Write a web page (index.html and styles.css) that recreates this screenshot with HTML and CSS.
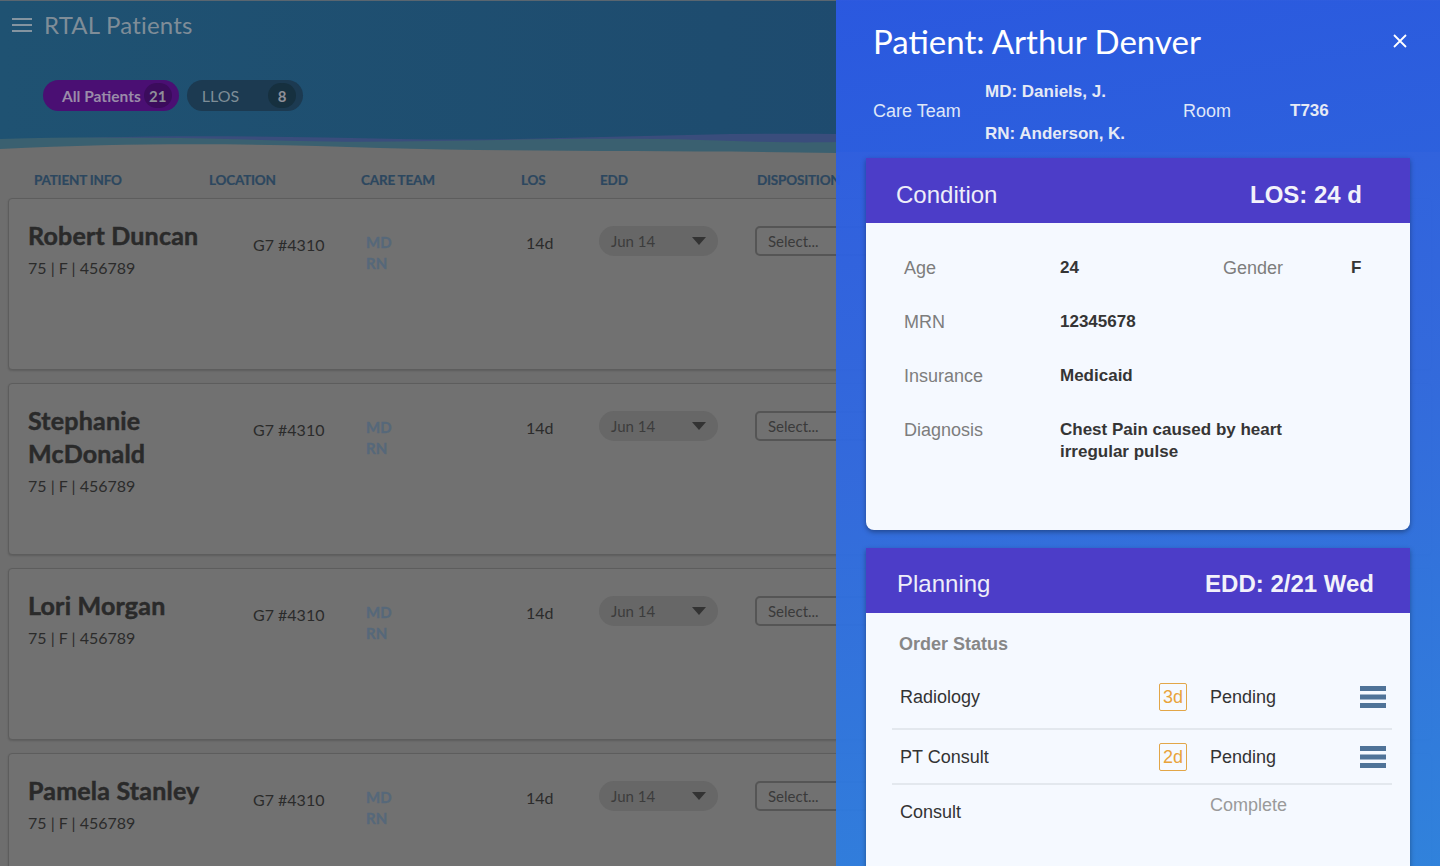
FILE: index.html
```html
<!DOCTYPE html>
<html lang="en">
<head>
<meta charset="utf-8">
<title>RTAL Patients</title>
<link rel="stylesheet" href="styles.css">
</head>
<body>
<div class="app">
  <header class="topbar">
    <div class="title-row">
      <svg class="menu-icon" width="20" height="14" viewBox="0 0 20 14"><rect y="0" width="20" height="2"/><rect y="6" width="20" height="2"/><rect y="12" width="20" height="2"/></svg>
      <h1 class="app-title">RTAL Patients</h1>
    </div>
    <div class="pills">
      <span class="pill pill--active">All Patients<span class="count">21</span></span>
      <span class="pill pill--llos">LLOS<span class="count">8</span></span>
    </div>
    <svg class="wave" width="836" height="26" viewBox="0 0 836 26" preserveAspectRatio="none">
      <path d="M0 12 C120 4 260 6 400 9 C540 12 680 2 836 4 L836 26 L0 26 Z" fill="#3a4d7c"/>
      <path d="M0 9 C100 6 200 8 300 11 C420 14 560 6 700 10 C760 12 800 13 836 12 L836 26 L0 26 Z" fill="#3a6070"/>
      <path d="M0 19 C150 12 260 14 380 18 C520 22 680 20 836 23 L836 26 L0 26 Z" fill="#6e6e6e"/>
    </svg>
  </header>

  <div class="cols">
    <span>PATIENT INFO</span><span>LOCATION</span><span>CARE TEAM</span><span>LOS</span><span>EDD</span><span>DISPOSITION</span>
  </div>

  <div class="list">
    <div class="card">
      <div class="pinfo"><div class="pname">Robert Duncan</div><div class="psub">75 | F | 456789</div></div>
      <div class="loc">G7 #4310</div>
      <div class="team"><div>MD</div><div>RN</div></div>
      <div class="los">14d</div>
      <div class="edd"><span>Jun 14</span><span class="caret"></span></div>
      <div class="dispo"><span class="select">Select...</span></div>
    </div>
    <div class="card">
      <div class="pinfo"><div class="pname">Stephanie McDonald</div><div class="psub">75 | F | 456789</div></div>
      <div class="loc">G7 #4310</div>
      <div class="team"><div>MD</div><div>RN</div></div>
      <div class="los">14d</div>
      <div class="edd"><span>Jun 14</span><span class="caret"></span></div>
      <div class="dispo"><span class="select">Select...</span></div>
    </div>
    <div class="card">
      <div class="pinfo"><div class="pname">Lori Morgan</div><div class="psub">75 | F | 456789</div></div>
      <div class="loc">G7 #4310</div>
      <div class="team"><div>MD</div><div>RN</div></div>
      <div class="los">14d</div>
      <div class="edd"><span>Jun 14</span><span class="caret"></span></div>
      <div class="dispo"><span class="select">Select...</span></div>
    </div>
    <div class="card">
      <div class="pinfo"><div class="pname">Pamela Stanley</div><div class="psub">75 | F | 456789</div></div>
      <div class="loc">G7 #4310</div>
      <div class="team"><div>MD</div><div>RN</div></div>
      <div class="los">14d</div>
      <div class="edd"><span>Jun 14</span><span class="caret"></span></div>
      <div class="dispo"><span class="select">Select...</span></div>
    </div>
  </div>
</div>

<aside class="drawer">
  <div class="drawer-head">
    <div class="drawer-title-row">
      <h2 class="drawer-title">Patient: Arthur Denver</h2>
      <svg class="close" width="14" height="14" viewBox="0 0 14 14"><path d="M1 1 L13 13 M13 1 L1 13" stroke="#fff" stroke-width="1.8" fill="none"/></svg>
    </div>
    <div class="care">
      <span class="care-label">Care Team</span>
      <span class="care-val">MD: Daniels, J.</span>
      <span class="care-label room-label">Room</span>
      <span class="care-val room-val">T736</span>
      <span class="care-val rn">RN: Anderson, K.</span>
    </div>
  </div>

  <section class="pcard">
    <div class="pcard-head"><span class="pcard-title">Condition</span><span class="pcard-meta">LOS: 24 d</span></div>
    <div class="pcard-body cond">
      <span class="lbl">Age</span><span class="val">24</span><span class="lbl">Gender</span><span class="val">F</span>
      <span class="lbl">MRN</span><span class="val">12345678</span><span></span><span></span>
      <span class="lbl">Insurance</span><span class="val">Medicaid</span><span></span><span></span>
      <span class="lbl">Diagnosis</span><span class="val diag">Chest Pain caused by heart irregular pulse</span>
    </div>
  </section>

  <section class="pcard">
    <div class="pcard-head pcard-head--plan"><span class="pcard-title">Planning</span><span class="pcard-meta">EDD: 2/21 Wed</span></div>
    <div class="pcard-body plan">
      <div class="sub-head">Order Status</div>
      <div class="orders">
        <div class="order order--first">
          <span class="oname">Radiology</span><span class="badge">3d</span><span class="ostatus">Pending</span>
          <svg class="drag" width="26" height="22" viewBox="0 0 26 22"><rect y="0" width="26" height="5"/><rect y="8.5" width="26" height="5"/><rect y="17" width="26" height="5"/></svg>
        </div>
        <div class="order">
          <span class="oname">PT Consult</span><span class="badge">2d</span><span class="ostatus">Pending</span>
          <svg class="drag" width="26" height="22" viewBox="0 0 26 22"><rect y="0" width="26" height="5"/><rect y="8.5" width="26" height="5"/><rect y="17" width="26" height="5"/></svg>
        </div>
        <div class="order order--last">
          <span class="oname">Consult</span><span></span><span class="ostatus ostatus--done">Complete</span><span></span>
        </div>
      </div>
      <div class="sub-head">Disposition Plan</div>
    </div>
  </section>
</aside>
</body>
</html>
```

FILE: styles.css
```css
* { box-sizing: border-box; }
html, body { margin: 0; padding: 0; }
body {
  width: 1440px;
  height: 866px;
  overflow: hidden;
  background: #6e6e6e;
  font-family: "Lato", "Liberation Sans", sans-serif;
  position: relative;
}

/* ---------- left app ---------- */
.app { width: 1440px; }

.topbar {
  position: relative;
  height: 152px;
  padding: 10px 12px 0;
  background: linear-gradient(90deg, #1f5272 0%, #1e4c6f 50%, #1f466c 100%);
  border-top: 1px solid #5a6670;
}
.title-row { display: flex; align-items: center; gap: 12px; height: 28px; }
.menu-icon { fill: #8494a0; }
.app-title {
  margin: 0;
  font-size: 24px;
  font-weight: 400;
  color: #7f8d98;
  line-height: 28px;
  letter-spacing: 0.2px;
}
.pills { display: flex; gap: 8px; margin: 41px 0 0 31px; }
.pill {
  display: inline-flex;
  align-items: center;
  height: 31px;
  border-radius: 16px;
  font-size: 16px;
}
.pill--active {
  background: #4a0f73;
  color: #9a8ca9;
  padding: 0 7px 0 19px;
  font-weight: 700;
  font-size: 15.5px;
}
.pill--active .count { background: #3b0c5c; margin-left: 3px; }
.pill--llos {
  background: #1c3a51;
  color: #7e8d97;
  padding: 0 7px 0 15px;
}
.pill--llos .count { background: #16303f; margin-left: 29px; }
.count {
  display: inline-flex;
  align-items: center;
  justify-content: center;
  min-width: 28px;
  height: 25px;
  border-radius: 13px;
  font-weight: 700;
  font-size: 15px;
  color: #8e8f98;
}
.wave { position: absolute; left: 0; bottom: -4px; display: block; }

.cols {
  display: grid;
  grid-template-columns: 175px 152px 160px 79px 157px 1fr;
  padding: 0 0 10px 34px;
  height: 46px;
  align-items: end;
  font-size: 13.5px;
  line-height: 16px;
  font-weight: 700;
  color: #2c475f;
  letter-spacing: -0.2px;
  -webkit-text-stroke: 0.2px #2c475f;
}

.list { display: flex; flex-direction: column; gap: 13px; padding: 0 8px; }
.card {
  display: grid;
  grid-template-columns: 225px 113px 160px 73px 156px 1fr;
  align-items: start;
  height: 172px;
  padding: 20px 0 0 19px;
  background: #717171;
  border: 1px solid #5d5d5d;
  border-radius: 4px;
  box-shadow: 0 1px 2px rgba(0,0,0,0.15);
  color: #2b2b2b;
}
.pname {
  font-size: 25px;
  font-weight: 700;
  line-height: 33px;
  width: 205px;
  letter-spacing: 0.2px;
  color: #2a2a2a;
  -webkit-text-stroke: 0.5px #2a2a2a;
}
.psub { font-size: 16px; line-height: 20px; margin-top: 6px; }
.loc { font-size: 16px; line-height: 20px; padding-top: 16px; }
.team {
  padding-top: 13px;
  font-size: 15px;
  font-weight: 700;
  line-height: 21px;
  color: #56687a;
  -webkit-text-stroke: 0.3px #56687a;
}
.los { font-size: 16px; line-height: 20px; padding-top: 14px; }
.edd {
  margin-top: 7px;
  width: 119px;
  height: 30px;
  border-radius: 15px;
  background: #676767;
  display: flex;
  align-items: center;
  justify-content: space-between;
  padding: 0 12px;
  font-size: 15px;
  color: #3c3c3c;
}
.caret {
  width: 0; height: 0;
  border-left: 7px solid transparent;
  border-right: 7px solid transparent;
  border-top: 8px solid #333;
}
.dispo { margin-top: 7px; }
.select {
  display: flex;
  align-items: center;
  width: 160px;
  height: 30px;
  border: 2px solid #555;
  border-radius: 5px;
  padding: 0 11px;
  font-size: 15px;
  color: #3a3a3a;
}

/* ---------- drawer ---------- */
.drawer {
  position: absolute;
  top: 0;
  right: 0;
  width: 604px;
  height: 866px;
  padding: 0 30px 0 30px;
  background: linear-gradient(170deg, rgba(43,89,229,0.95) 0%, rgba(48,106,225,0.95) 50%, rgba(45,131,225,0.95) 100%);
  font-family: "Liberation Sans", Arial, sans-serif;
  color: #fff;
  overflow: hidden;
}
.drawer-head { padding: 22px 3px 0 7px; }
.drawer-title-row { display: flex; justify-content: space-between; align-items: center; height: 38px; }
.drawer-title {
  margin: 0;
  font-family: "Lato", "Liberation Sans", sans-serif;
  font-weight: 400;
  font-size: 33px;
  line-height: 38px;
  color: #fff;
}
.care {
  display: grid;
  grid-template-columns: 112px 198px 107px 1fr;
  grid-template-rows: 22px 22px;
  row-gap: 20px;
  margin-top: 21px;
  align-items: center;
}
.care-label { grid-row: 1 / 3; font-size: 18px; color: #dfe6f8; align-self: center; margin-top: -4px; }
.care-val { font-size: 17px; font-weight: 700; color: #e6eaf5; }
.room-val { grid-row: 1 / 3; align-self: center; margin-top: -4px; }
.rn { grid-column: 2; grid-row: 2; }

.pcard {
  margin-top: 13px;
  border-radius: 0 0 8px 8px;
  background: #f5f9ff;
  box-shadow: 0 2px 5px rgba(0,0,0,0.35);
  overflow: hidden;
}
.pcard + .pcard { margin-top: 18px; }
.pcard-head {
  height: 65px;
  display: flex;
  align-items: center;
  justify-content: space-between;
  padding: 8px 48px 0 30px;
  background: #4c3dc8;
  color: #eeeef9;
}
.pcard-head--plan { padding: 7px 36px 0 31px; }
.pcard-title { font-size: 24px; }
.pcard-meta { font-size: 24px; font-weight: 700; color: #f2f2fa; }

.cond {
  display: grid;
  grid-template-columns: 156px 163px 128px 1fr;
  row-gap: 32px;
  align-content: start;
  height: 307px;
  padding: 34px 0 0 38px;
  line-height: 22px;
}
.lbl { font-size: 18px; color: #7d7d7d; }
.val { font-size: 17px; font-weight: 700; color: #353535; }
.diag { grid-column: 2 / 5; max-width: 250px; }

.plan { padding: 20px 18px 0 26px; height: 260px; }
.sub-head {
  font-size: 18px;
  font-weight: 700;
  color: #878787;
  line-height: 22px;
  padding-left: 7px;
}
.orders { margin: 16px 0 0; }
.order {
  display: grid;
  grid-template-columns: 259px 51px 150px 26px;
  align-items: center;
  padding: 13px 0 12px 8px;
  border-bottom: 2px solid #e3e8ee;
  line-height: 22px;
}
.order--first { padding-top: 12px; padding-bottom: 17px; }
.order--last { border-bottom: none; padding-top: 9px; padding-bottom: 12px; margin-bottom: 22px; }
.oname { font-size: 18px; color: #333; }
.badge {
  width: 28px;
  height: 28px;
  border: 1px solid #e2a648;
  border-radius: 2px;
  color: #e8a33a;
  font-size: 18px;
  display: flex;
  align-items: center;
  justify-content: center;
}
.ostatus { font-size: 18px; color: #333; }
.ostatus--done { color: #9a9a9a; margin-bottom: 14px; }
.drag { fill: #4f7398; display: block; }
```
